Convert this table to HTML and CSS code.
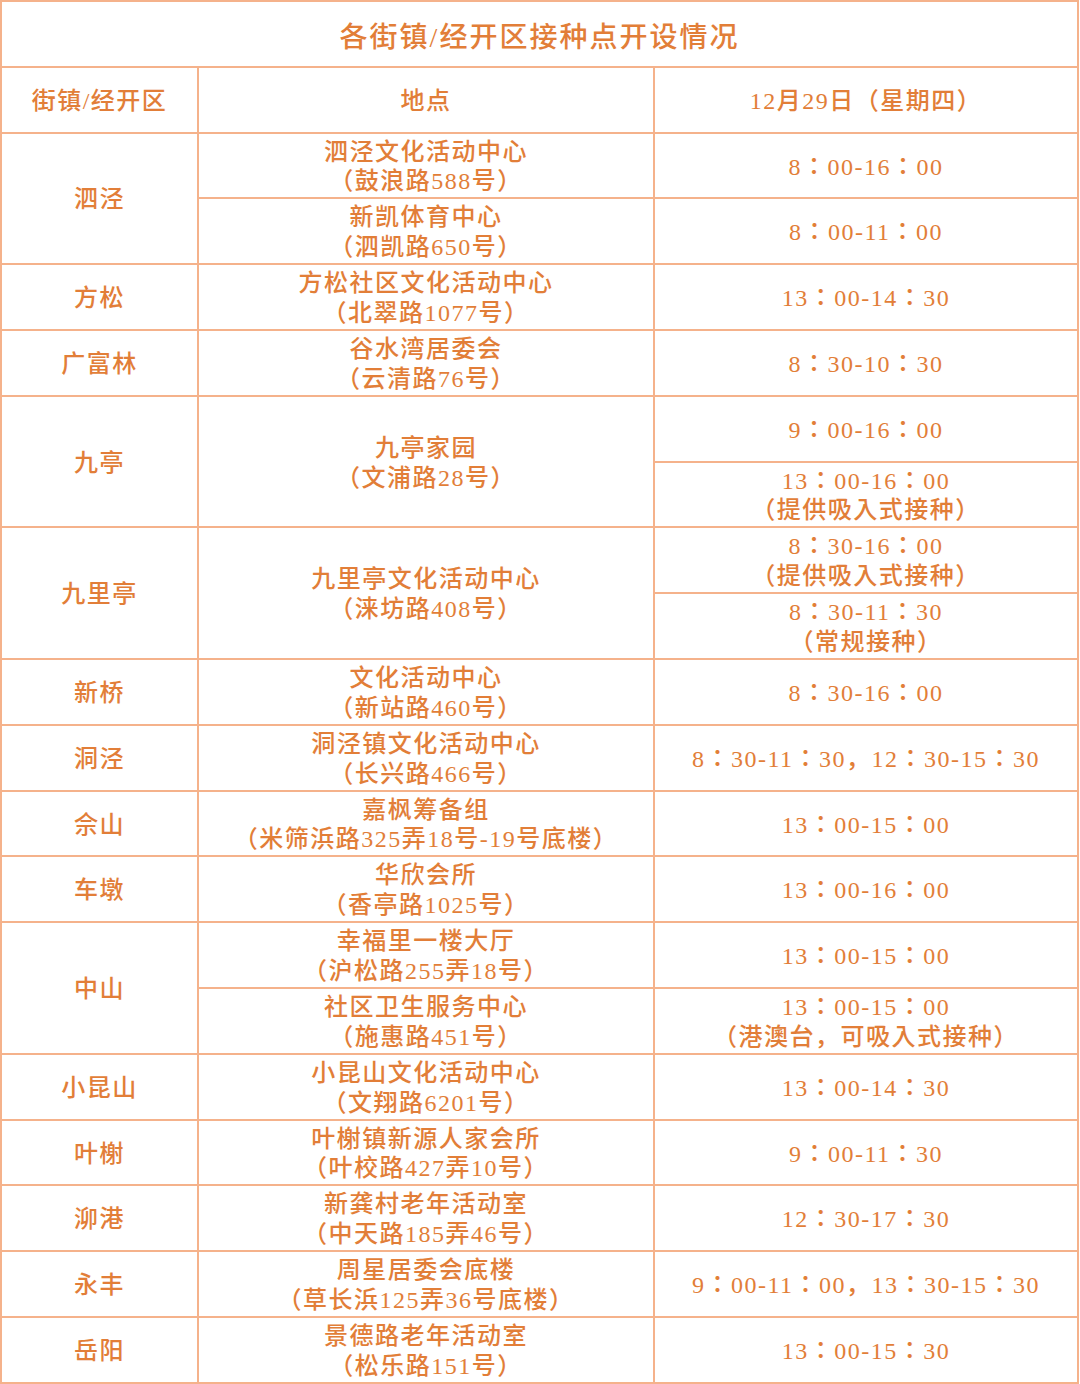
FILE: index.html
```html
<!DOCTYPE html>
<html lang="zh-CN">
<head>
<meta charset="utf-8">
<title>各街镇/经开区接种点开设情况</title>
<link rel="stylesheet" href="styles.css">
</head>
<body>
<table class="sched">
  <colgroup>
    <col class="c-town">
    <col class="c-place">
    <col class="c-time">
  </colgroup>
  <tr class="title"><td colspan="3">各街镇/经开区接种点开设情况</td></tr>
  <tr class="head"><td>街镇/经开区</td><td>地点</td><td>12月29日（星期四）</td></tr>

  <tr><td rowspan="2">泗泾</td><td>泗泾文化活动中心<br>（鼓浪路588号）</td><td class="t">8：00-16：00</td></tr>
  <tr><td>新凯体育中心<br>（泗凯路650号）</td><td class="t">8：00-11：00</td></tr>

  <tr><td>方松</td><td>方松社区文化活动中心<br>（北翠路1077号）</td><td class="t">13：00-14：30</td></tr>
  <tr><td>广富林</td><td>谷水湾居委会<br>（云清路76号）</td><td class="t">8：30-10：30</td></tr>

  <tr><td rowspan="2">九亭</td><td rowspan="2">九亭家园<br>（文浦路28号）</td><td class="t">9：00-16：00</td></tr>
  <tr><td class="t">13：00-16：00<br>（提供吸入式接种）</td></tr>

  <tr><td rowspan="2">九里亭</td><td rowspan="2">九里亭文化活动中心<br>（涞坊路408号）</td><td class="t">8：30-16：00<br>（提供吸入式接种）</td></tr>
  <tr><td class="t">8：30-11：30<br>（常规接种）</td></tr>

  <tr><td>新桥</td><td>文化活动中心<br>（新站路460号）</td><td class="t">8：30-16：00</td></tr>
  <tr><td>洞泾</td><td>洞泾镇文化活动中心<br>（长兴路466号）</td><td class="t">8：30-11：30，12：30-15：30</td></tr>
  <tr><td>佘山</td><td>嘉枫筹备组<br>（米筛浜路325弄18号-19号底楼）</td><td class="t">13：00-15：00</td></tr>
  <tr><td>车墩</td><td>华欣会所<br>（香亭路1025号）</td><td class="t">13：00-16：00</td></tr>

  <tr><td rowspan="2">中山</td><td>幸福里一楼大厅<br>（沪松路255弄18号）</td><td class="t">13：00-15：00</td></tr>
  <tr><td>社区卫生服务中心<br>（施惠路451号）</td><td class="t">13：00-15：00<br>（港澳台，可吸入式接种）</td></tr>

  <tr><td>小昆山</td><td>小昆山文化活动中心<br>（文翔路6201号）</td><td class="t">13：00-14：30</td></tr>
  <tr><td>叶榭</td><td>叶榭镇新源人家会所<br>（叶校路427弄10号）</td><td class="t">9：00-11：30</td></tr>
  <tr><td>泖港</td><td>新龚村老年活动室<br>（中天路185弄46号）</td><td class="t">12：30-17：30</td></tr>
  <tr><td>永丰</td><td>周星居委会底楼<br>（草长浜125弄36号底楼）</td><td class="t">9：00-11：00，13：30-15：30</td></tr>
  <tr><td>岳阳</td><td>景德路老年活动室<br>（松乐路151号）</td><td class="t">13：00-15：30</td></tr>
</table>
</body>
</html>
```
FILE: styles.css
```css
html, body {
  margin: 0;
  padding: 0;
  background: #ffffff;
}

.sched {
  width: 1077px;
  border-collapse: collapse;
  table-layout: fixed;
  font-family: "Liberation Serif", "Noto Sans CJK SC", serif;
  font-weight: 500;
  color: #e27e38;
  font-size: 24px;
  line-height: 29.8px;
  letter-spacing: 1.5px;
  text-spacing-trim: space-all;
}

.c-town { width: 197px; }
.c-place { width: 456px; }
.c-time { width: 424px; }

.sched td {
  border: 2px solid #f5b28b;
  text-align: center;
  vertical-align: middle;
  padding: 4px 0 0 0;
  white-space: nowrap;
}

.sched td.t {
  font-family: "Liberation Serif", "Noto Sans CJK JP", serif;
  font-feature-settings: "locl" 0;
}

.sched tr {
  height: 65.8px;
}

.title td {
  font-size: 28px;
  letter-spacing: 2px;
  padding-top: 7px;
}
```
